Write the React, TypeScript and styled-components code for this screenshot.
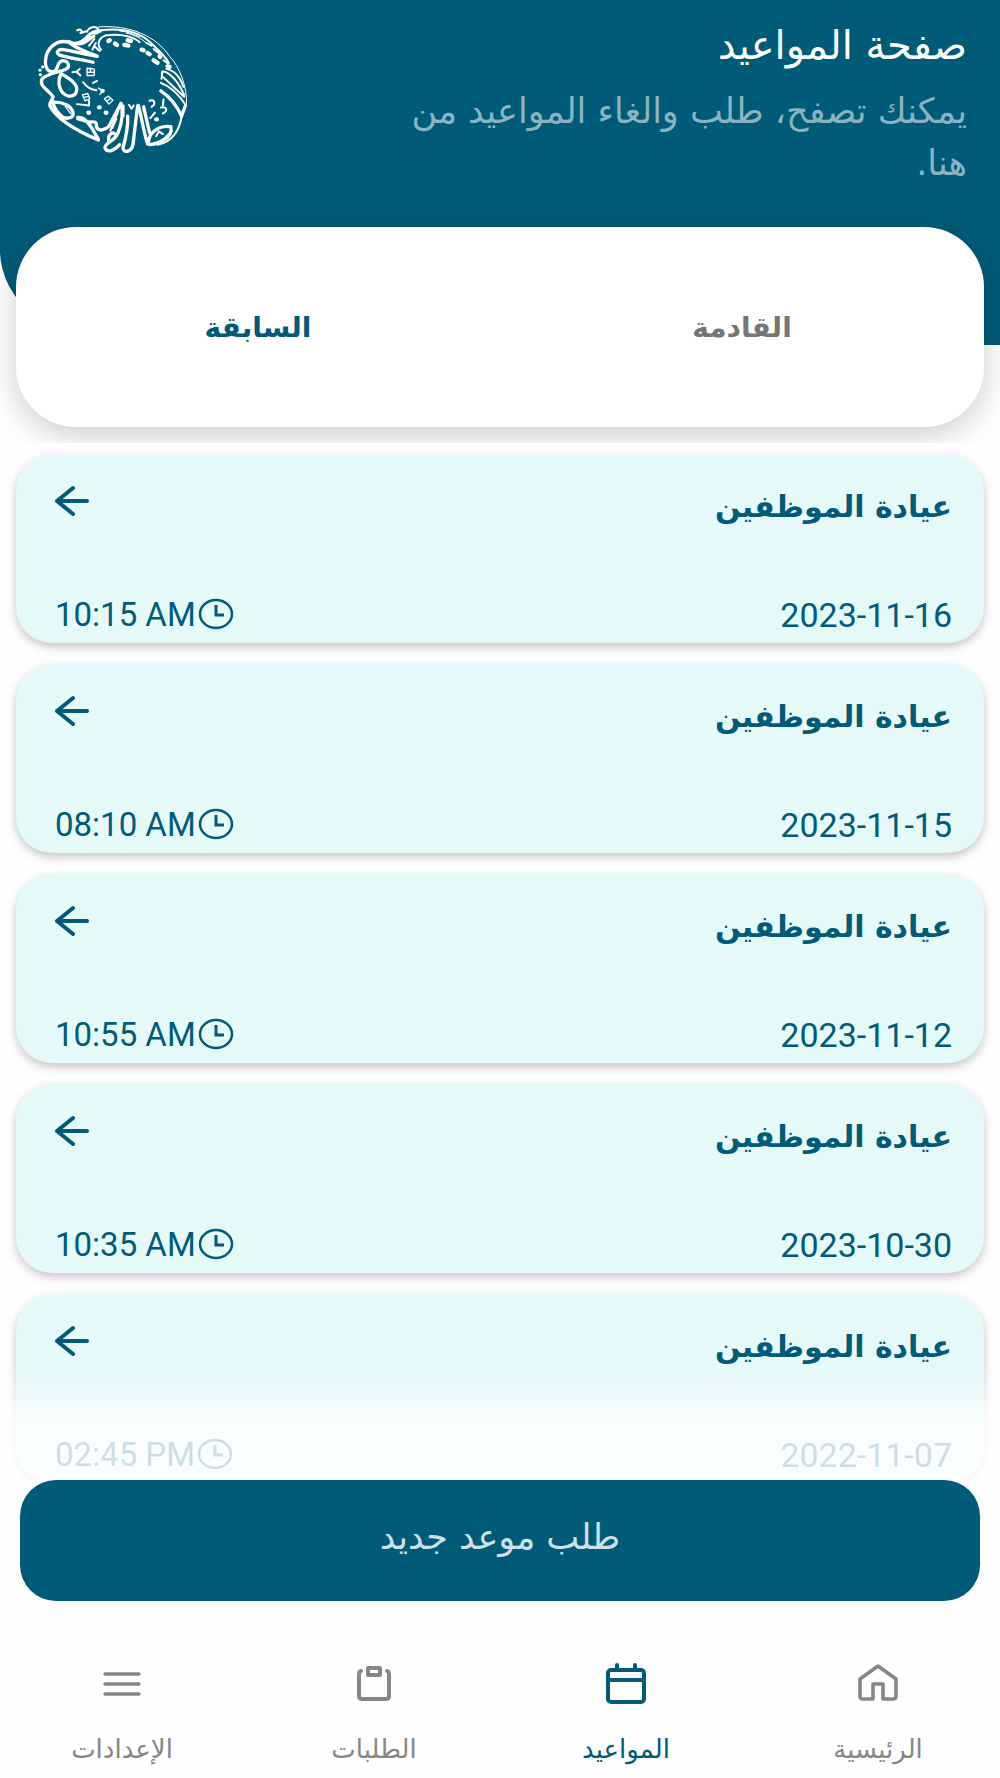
import React from "react";
import styled, { createGlobalStyle } from "styled-components";

const teal = "#005b78";

const GlobalStyle = createGlobalStyle`
  * { box-sizing: border-box; }
  body { margin: 0; background: #fefefe; font-family: "DejaVu Sans", sans-serif; }
  button { font: inherit; border: 0; padding: 0; cursor: pointer; }
  h1, h2, p, ul { margin: 0; padding: 0; }
  ul { list-style: none; }
  a { text-decoration: none; }
`;

const Screen = styled.main`
  height: 100vh;
  display: flex;
  flex-direction: column;
`;

const Top = styled.section`
  flex: none;
  overflow: hidden;
  padding-bottom: 16px;
`;

const Banner = styled.header`
  display: flex;
  justify-content: space-between;
  align-items: flex-start;
  height: 345px;
  padding: 23px 33px 0 33px;
  background: ${teal};
  border-bottom-left-radius: 120px 95px;
`;

const Intro = styled.div`
  width: 580px;
`;

const Title = styled.h1`
  font-size: 40px;
  line-height: 44px;
  font-weight: 400;
  color: #fff;
`;

const Subtitle = styled.p`
  margin-top: 18px;
  font-size: 35px;
  line-height: 52px;
  color: #8ab4c2;
`;

const Tabs = styled.div`
  position: relative;
  display: flex;
  height: 200px;
  margin: -118px 16px 0;
  border-radius: 60px;
  background: #fff;
  box-shadow: 0 8px 30px rgba(0, 0, 0, 0.2);
`;

const Tab = styled.button<{ $active?: boolean }>`
  flex: 1;
  background: none;
  font-size: 28px;
  font-weight: 700;
  color: ${(p) => (p.$active ? teal : "#757575")};
`;

const ListArea = styled.section`
  position: relative;
  flex: 1;
  min-height: 0;
`;

const List = styled.ul`
  height: 100%;
  padding: 11px 16px 0;
  display: flex;
  flex-direction: column;
  gap: 21px;
  overflow-y: auto;
  scrollbar-width: none;
`;

const Fade = styled.div`
  position: absolute;
  inset: auto 0 0;
  height: 112px;
  pointer-events: none;
  background: linear-gradient(rgba(255, 255, 255, 0), rgba(255, 255, 255, 0.8) 50%);
`;

const Card = styled.li`
  flex: none;
  display: flex;
  flex-direction: column;
  justify-content: space-between;
  height: 189px;
  padding: 29px 32px 8px 39px;
  border-radius: 36px;
  background: #e5f9f9;
  color: ${teal};
  box-shadow: 0 4px 10px rgba(0, 0, 0, 0.22);
`;

const Row = styled.div`
  display: flex;
  justify-content: space-between;
  align-items: flex-start;
`;

const CardTitle = styled.h2`
  font-size: 30px;
  line-height: 48px;
  font-weight: 700;
`;

const OpenButton = styled.button`
  display: flex;
  background: none;
  color: inherit;
`;

const DateText = styled.time`
  font-family: Roboto, sans-serif;
  font-size: 34px;
  line-height: 40px;
`;

const TimeSlot = styled.span`
  display: flex;
  align-items: center;
  direction: ltr;
  gap: 2px;
  font-family: Roboto, sans-serif;
  font-size: 33px;
  line-height: 40px;
`;

const RequestButton = styled.button`
  flex: none;
  height: 121px;
  margin: 0 20px;
  padding-bottom: 8px;
  border-radius: 36px;
  background: ${teal};
  color: #cfe0e6;
  font-size: 35px;
`;

const Nav = styled.nav`
  flex: none;
  height: 177px;
  display: grid;
  grid-template-columns: repeat(4, 1fr);
  gap: 8px;
`;

const NavLink = styled.a<{ $active?: boolean }>`
  display: flex;
  flex-direction: column;
  align-items: center;
  padding-top: 60px;
  gap: 24px;
  font-size: 26px;
  line-height: 36px;
  color: ${(p) => (p.$active ? teal : "#868686")};
`;

const stroke = {
  fill: "none",
  stroke: "currentColor",
  strokeLinecap: "round" as const,
  strokeLinejoin: "round" as const,
};

const ArrowIcon = () => (
  <svg width="36" height="36" viewBox="0 0 36 36" {...stroke} strokeWidth="4" aria-hidden="true">
    <path d="M32 18H2M18 5L2 18L18 31" />
  </svg>
);

const ClockIcon = () => (
  <svg width="36" height="34" viewBox="0 0 36 34" {...stroke} strokeWidth="2.5" aria-hidden="true">
    <ellipse cx="18" cy="16" rx="16" ry="14" />
    <path d="M18 7V17H26" strokeWidth="3" strokeLinecap="butt" strokeLinejoin="miter" />
  </svg>
);

const HomeIcon = () => (
  <svg width="44" height="46" viewBox="0 0 44 46" {...stroke} strokeWidth="3.6" aria-hidden="true">
    <path d="M22 5L4 18V35Q4 38 7 38H17V23H27V38H37Q40 38 40 35V18Z" />
  </svg>
);

const CalendarIcon = () => (
  <svg width="44" height="46" viewBox="0 0 44 46" {...stroke} strokeWidth="4" aria-hidden="true">
    <rect x="4" y="9" width="36" height="32" rx="3" />
    <path d="M4 19H40M13 4V9M31 4V9" />
  </svg>
);

const ClipboardIcon = () => (
  <svg width="44" height="46" viewBox="0 0 44 46" {...stroke} strokeWidth="4" aria-hidden="true">
    <path d="M9 10Q7 10 7 14V35Q7 38 10 38H34Q37 38 37 35V14Q37 10 35 10" />
    <rect x="16" y="7" width="12" height="7" />
  </svg>
);

const MenuIcon = () => (
  <svg width="44" height="46" viewBox="0 0 44 46" {...stroke} strokeWidth="3.4" aria-hidden="true">
    <path d="M5 13H39M5 23H39M5 33H39" />
  </svg>
);

const Logo = () => (
  <svg
    width="160"
    height="133"
    viewBox="100 70 480 400"
    fill="none"
    stroke="#fff"
    strokeLinecap="round"
    strokeLinejoin="round"
    role="img"
    aria-label="الشعار"
  >
    <g strokeWidth="10">
      <path d="M292 170C262 157 228 148 208 128C170 118 140 145 137 182C135 206 145 217 160 216C178 214 168 188 188 183C206 184 214 202 196 210C172 220 138 222 126 240C118 262 146 270 160 292C156 306 148 310 150 318C166 352 212 386 296 422" />
      <path d="M280 188C250 180 205 176 178 166C166 158 176 148 190 150C222 154 256 166 292 170" />
      <path d="M184 222C170 250 180 284 206 290C232 292 238 266 222 250C212 238 198 232 184 222Z" />
      <path d="M158 308C190 306 216 320 220 340C222 354 208 360 190 354C176 344 164 326 158 308" />
      <path d="M234 354C256 352 262 370 274 382L296 420M234 358L268 368C286 366 292 366 290 382C296 398 316 392 328 380L364 312" />
      <path d="M364 312C372 340 366 372 356 398C344 430 314 428 316 446C322 462 344 454 360 436M328 428C322 408 336 396 346 404" />
      <path d="M384 350C386 380 380 410 370 446C374 464 396 456 400 436L414 320" />
      <path d="M416 318C426 350 430 390 444 434C458 440 476 430 492 422C510 414 518 396 514 382C492 378 468 386 452 408L444 434" />
      <path d="M432 322L450 400M484 274C510 292 534 322 546 350L558 318" />
      <path d="M208 126C224 136 244 132 262 112C274 98 284 92 302 94M234 132C254 136 262 120 282 110" />
    </g>
    <g strokeWidth="6">
      <path d="M232 92C244 86 250 96 242 100L262 94M262 96C268 80 290 78 296 90C302 98 288 106 278 100" />
      <path d="M304 92C370 84 420 100 452 128C470 146 496 168 508 190" />
      <path d="M304 150C288 132 300 106 330 106C366 102 404 112 420 128" />
      <path d="M440 130L456 138M462 148L480 162M492 182L506 192" />
      <path d="M488 216C508 214 536 246 554 286M500 208C524 212 542 234 552 262M488 216L486 238" />
      <path d="M484 250C510 260 536 282 558 316M490 232L554 292" />
      <path d="M546 352C540 392 518 430 474 436M474 436L516 396" />
      <path d="M470 410L478 396L490 404" />
      <path d="M356 334L332 394M372 318V350M350 358L338 386" />
      <path d="M278 150L288 130M268 138L284 118M284 140L300 154" />
      <path d="M218 218L232 216L240 208M232 218L242 228M250 248C262 264 274 272 290 272M280 250L292 244" />
      <path d="M232 314L268 318M268 304V316M388 316L396 328L402 318" />
      <path d="M450 304C466 298 470 314 456 322M484 324C502 320 506 334 490 342M452 356L466 340M492 300L490 318" />
    </g>
    <g strokeWidth="3">
      <path d="M296 82C390 74 470 110 510 170C540 200 564 264 561 316L540 376" />
      <path d="M380 100C404 106 424 116 438 128M360 94C384 96 404 104 420 112" />
    </g>
    <g strokeWidth="4">
      <path d="M262 206L282 208M262 218H284M262 228H282M262 206V226M284 210V226M272 206V216" />
      <path d="M248 286L264 282L270 298L256 304ZM254 294L268 290" />
      <path d="M314 298L326 290L340 302L328 314ZM320 306L334 296" />
      <path d="M196 320L212 342" />
      <path d="M296 266L312 274L300 284" />
    </g>
    <g strokeWidth="9">
      <path d="M120 212H121M128 202H129M121 226H122" />
    </g>
    <g strokeWidth="13">
      <path d="M346 132L352 136M374 136L386 138M326 124L330 122M426 150L432 152M444 160L450 164M462 182L474 190M384 122L394 124" />
      <path d="M298 324H300M318 340H320M266 340H268M470 360H472M308 274H309" />
      <path d="M504 200L510 202M480 170L482 172" />
    </g>
  </svg>
);

const appointments = [
  { date: "2023-11-16", time: "10:15 AM" },
  { date: "2023-11-15", time: "08:10 AM" },
  { date: "2023-11-12", time: "10:55 AM" },
  { date: "2023-10-30", time: "10:35 AM" },
  { date: "2022-11-07", time: "02:45 PM" },
];

const links = [
  { label: "الرئيسية", Icon: HomeIcon },
  { label: "المواعيد", Icon: CalendarIcon, active: true },
  { label: "الطلبات", Icon: ClipboardIcon },
  { label: "الإعدادات", Icon: MenuIcon },
];

export default function App() {
  return (
    <Screen dir="rtl" lang="ar">
      <GlobalStyle />
      <Top>
        <Banner>
          <Intro>
            <Title>صفحة المواعيد</Title>
            <Subtitle>يمكنك تصفح، طلب والغاء المواعيد من هنا.</Subtitle>
          </Intro>
          <Logo />
        </Banner>
        <Tabs role="tablist">
          <Tab role="tab" aria-selected={false}>القادمة</Tab>
          <Tab role="tab" aria-selected $active>السابقة</Tab>
        </Tabs>
      </Top>
      <ListArea>
        <List>
          {appointments.map((item) => (
            <Card key={item.date}>
              <Row>
                <CardTitle>عيادة الموظفين</CardTitle>
                <OpenButton aria-label="عرض الموعد">
                  <ArrowIcon />
                </OpenButton>
              </Row>
              <Row>
                <DateText dateTime={item.date}>{item.date}</DateText>
                <TimeSlot>
                  {item.time}
                  <ClockIcon />
                </TimeSlot>
              </Row>
            </Card>
          ))}
        </List>
        <Fade />
      </ListArea>
      <RequestButton>طلب موعد جديد</RequestButton>
      <Nav>
        {links.map(({ label, Icon, active }) => (
          <NavLink key={label} href="#" $active={active} aria-current={active ? "page" : undefined}>
            <Icon />
            {label}
          </NavLink>
        ))}
      </Nav>
    </Screen>
  );
}
